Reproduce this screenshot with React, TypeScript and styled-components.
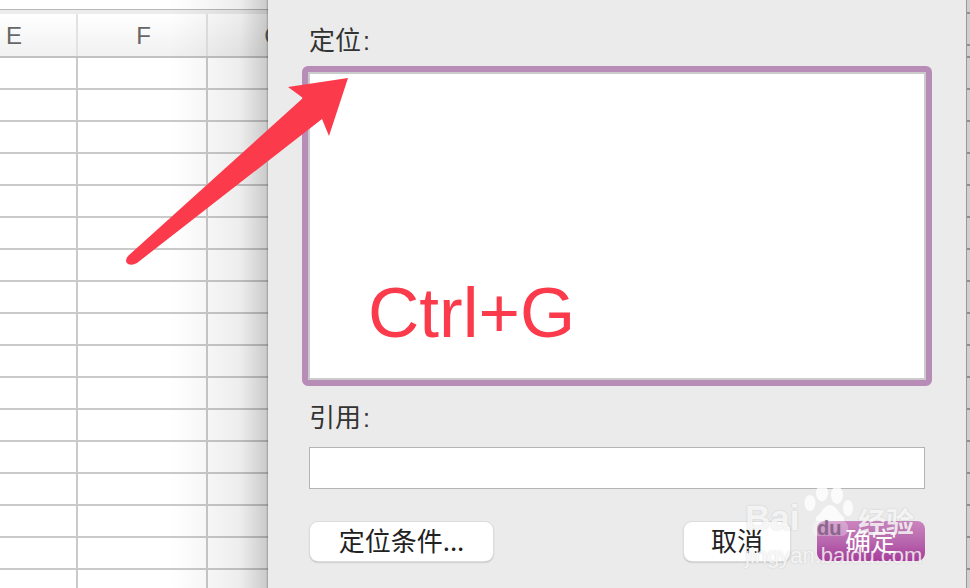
import React from "react";
import styled, { createGlobalStyle } from "styled-components";

const cjk = `"Noto Sans CJK SC", "Liberation Sans", sans-serif`;

const GlobalStyle = createGlobalStyle`
    html, body {
        margin: 0;
        padding: 0;
        width: 970px;
        height: 588px;
        overflow: hidden;
        background: #ebebeb;
    }
    * {
        box-sizing: border-box;
    }
`;

const Page = styled.div`
    position: relative;
    display: flex;
    width: 970px;
    height: 588px;
    overflow: hidden;
    font-family: ${cjk};
`;

// spreadsheet behind the dialog
const Sheet = styled.div`
    position: relative;
    width: 268px;
    height: 588px;
    flex: none;
    overflow: hidden;
    background: #fff;
    &::after {
        content: "";
        position: absolute;
        inset: 0;
        background: linear-gradient(
            to right,
            rgba(0, 0, 0, 0) 170px,
            rgba(0, 0, 0, 0.035) 208px,
            rgba(0, 0, 0, 0.07) 240px,
            rgba(0, 0, 0, 0.2) 266px,
            rgba(0, 0, 0, 0.38) 268px
        );
    }
`;
const TopStrip = styled.div`
    height: 14px;
    padding-top: 9px;
    background: #fff;
    &::before {
        content: "";
        display: block;
        height: 5px;
        background: #ececec;
        border-top: 1px solid #b8b8b8;
        border-bottom: 1px solid #9c9c9c;
    }
`;
const HeaderRow = styled.div`
    display: grid;
    grid-template-columns: 78px 130px 130px;
    height: 44px;
    background: linear-gradient(to bottom, #fff, #f1f1f1);
    border-bottom: 2px solid #c2c2c2;
`;
const ColumnHead = styled.div<{ $start?: boolean }>`
    display: flex;
    align-items: center;
    justify-content: ${(p) => (p.$start ? "flex-start" : "center")};
    padding-top: 2px;
    padding-left: ${(p) => (p.$start ? "6px" : "3px")};
    border-right: 2px solid #e2e2e2;
    font-family: "Liberation Sans", sans-serif;
    font-size: 24px;
    color: #666;
`;
const Row = styled.div`
    display: grid;
    grid-template-columns: 78px 130px 130px;
    height: 32px;
    border-bottom: 2px solid #cacaca;
`;
const Cell = styled.div`
    border-right: 2px solid #cacaca;
`;

// the dialog
const Dialog = styled.div`
    display: flex;
    flex-direction: column;
    flex: 1;
    padding: 25px 34px 0;
    background: #ebebeb;
`;
const FieldLabel = styled.div<{ $gap: number }>`
    height: 28px;
    margin: ${(p) => p.$gap}px 7px 0;
    font-size: 26px;
    line-height: 28px;
    color: #333;
`;
const Colon = styled.span`
    margin-left: 2px;
    font-family: "Liberation Sans", sans-serif;
    font-size: 25px;
`;
const LocateBox = styled.div`
    display: flex;
    align-items: flex-end;
    height: 320px;
    margin-top: 13px;
    padding: 0 0 27px 60px;
    background: #fff;
    border: 6px solid #b78db8;
    border-radius: 6px;
    box-shadow: inset 0 0 0 2px #cbcbcb;
`;
const Hint = styled.div`
    font-family: "Liberation Sans", sans-serif;
    font-size: 71px;
    line-height: 80px;
    color: #fb3a4b;
`;
const RefInput = styled.div`
    height: 42px;
    margin: 17px 7px 0;
    background: #fff;
    border: 1px solid #b4b4b4;
`;
const Footer = styled.div`
    display: flex;
    align-items: center;
    height: 40px;
    margin: 32px 7px 0 8px;
`;
const Spacer = styled.div`
    flex: 1;
`;
const Button = styled.div<{ $width: number }>`
    display: flex;
    align-items: center;
    justify-content: center;
    width: ${(p) => p.$width}px;
    height: 39px;
    padding-bottom: 3px;
    background: #fff;
    border-radius: 8px;
    box-shadow: 0 0 0 1px #dcdcdc, 0 1px 2px rgba(0, 0, 0, 0.4);
    font-size: 26px;
    line-height: 30px;
    color: #222;
`;
const PrimaryButton = styled(Button)`
    height: 40px;
    margin-left: 27px;
    background: linear-gradient(to bottom, #cb85bf, #b868ae 50%, #a93c9d);
    box-shadow: none;
    color: #fff;
`;
const Sliver = styled.div`
    width: 4px;
    flex: none;
    background-color: #cfcfcf;
    background-image: repeating-linear-gradient(
        to bottom,
        #8f8f8f 0,
        #8f8f8f 2px,
        transparent 2px,
        transparent 32px
    );
    background-position: 0 56px;
    border-left: 1px solid #9a9a9a;
`;

// annotation and watermark lying over the page
const Overlay = styled.svg`
    position: absolute;
    left: 0;
    top: 0;
    pointer-events: none;
`;
const Watermark = styled.div`
    position: absolute;
    left: 745px;
    top: 485px;
    width: 180px;
    height: 84px;
    color: rgba(255, 255, 255, 0.78);
    text-shadow: 0 0 2px rgba(120, 120, 120, 0.3);
    pointer-events: none;
`;
const MarkTop = styled.div`
    display: flex;
    align-items: flex-end;
    height: 54px;
`;
const MarkBai = styled.span`
    width: 58px;
    margin-bottom: 1px;
    font-family: "Liberation Sans", sans-serif;
    font-size: 35px;
    font-weight: bold;
    line-height: 40px;
`;
const MarkPaw = styled.svg`
    flex: none;
`;
const MarkCn = styled.span`
    margin-left: 3px;
    margin-bottom: 2px;
    font-size: 28px;
    font-weight: bold;
    line-height: 32px;
`;
const MarkUrl = styled.div`
    margin-top: 5px;
    font-family: "Liberation Sans", sans-serif;
    font-size: 22px;
    line-height: 24px;
    white-space: nowrap;
`;

const rows = Array.from({ length: 17 }, (_, i) => i);

export default function App() {
    return (
        <Page>
            <GlobalStyle />
            <Sheet>
                <TopStrip />
                <HeaderRow>
                    <ColumnHead $start>E</ColumnHead>
                    <ColumnHead>F</ColumnHead>
                    <ColumnHead>G</ColumnHead>
                </HeaderRow>
                {rows.map((r) => (
                    <Row key={r}>
                        <Cell />
                        <Cell />
                        <Cell />
                    </Row>
                ))}
            </Sheet>
            <Dialog>
                <FieldLabel $gap={0}>
                    定位<Colon>:</Colon>
                </FieldLabel>
                <LocateBox>
                    <Hint>Ctrl+G</Hint>
                </LocateBox>
                <FieldLabel $gap={16}>
                    引用<Colon>:</Colon>
                </FieldLabel>
                <RefInput />
                <Footer>
                    <Button $width={183}>定位条件...</Button>
                    <Spacer />
                    <Button $width={106}>取消</Button>
                    <PrimaryButton $width={108}>确定</PrimaryButton>
                </Footer>
            </Dialog>
            <Sliver />
            <Overlay width="970" height="588" viewBox="0 0 970 588">
                <path
                    d="M348 78 L288 87 L303 98 L128 256 Q124 261 128 264 Q132 266 137 263 L322 119 L329 136 Z"
                    fill="#fb3a4b"
                />
            </Overlay>
            <Watermark>
                <MarkTop>
                    <MarkBai>Bai</MarkBai>
                    <MarkPaw width="52" height="54" viewBox="0 0 52 54">
                        <g fill="rgba(255,255,255,0.78)">
                            <ellipse cx="7" cy="18" rx="5.5" ry="8" />
                            <ellipse cx="19" cy="8" rx="6" ry="8.5" />
                            <ellipse cx="34" cy="10" rx="6" ry="9" />
                            <ellipse cx="45" cy="23" rx="5" ry="8" />
                            <path d="M27 20 C33 20 36 29 41 32 L41 36 L13 36 L13 32 C18 29 21 20 27 20 Z" />
                        </g>
                        <path
                            d="M13 36 L41 36 C48 40 46 51 38 51 L14 51 C8 50 8 40 13 36 Z"
                            fill="rgba(255,255,255,0.28)"
                        />
                        <text x="14" y="50" fontFamily="Liberation Sans" fontSize="20" fontWeight="bold" fill="rgba(120,85,125,0.75)">
                            du
                        </text>
                    </MarkPaw>
                    <MarkCn>经验</MarkCn>
                </MarkTop>
                <MarkUrl>jingyan.baidu.com</MarkUrl>
            </Watermark>
        </Page>
    );
}
